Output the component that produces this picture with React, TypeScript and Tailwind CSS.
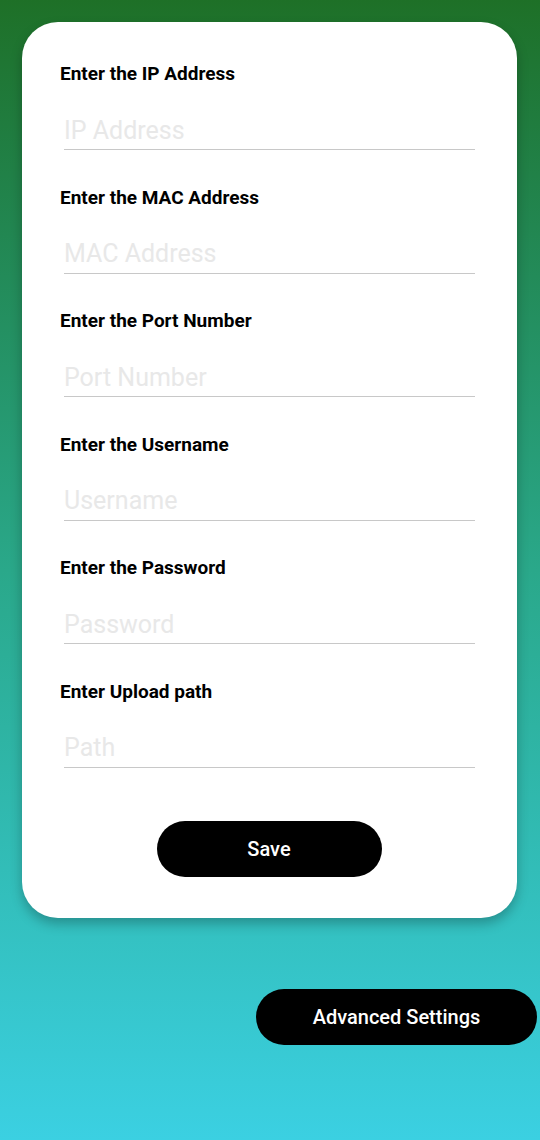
const fields = [
  { label: "Enter the IP Address", placeholder: "IP Address" },
  { label: "Enter the MAC Address", placeholder: "MAC Address" },
  { label: "Enter the Port Number", placeholder: "Port Number" },
  { label: "Enter the Username", placeholder: "Username" },
  { label: "Enter the Password", placeholder: "Password" },
  { label: "Enter Upload path", placeholder: "Path" },
];

export default function App() {
  return (
    <div className="min-h-[1140px] w-full bg-gradient-to-b from-[#1e7027] via-[#2aa88a] to-[#3bd0e2] pt-[22px] font-['Roboto',sans-serif]">
      <div className="ml-[22px] mr-[23px] rounded-[36px] bg-white pl-[38px] pr-[42px] pt-[40px] pb-[41px] shadow-[0_6px_12px_rgba(0,0,0,0.25)]">
        <div className="flex flex-col gap-[35.5px]">
          {fields.map((f) => (
            <div key={f.label} className="flex flex-col">
              <label className="text-[19px] leading-[24px] font-bold text-black">{f.label}</label>
              <input
                placeholder={f.placeholder}
                className="ml-[4px] mt-[22px] h-[42px] border-b-[1.5px] border-[#c8c8c8] bg-transparent px-0 pt-[3px] text-[25px] outline-none placeholder:text-[#e8e8e8]"
              />
            </div>
          ))}
        </div>
        <div className="mt-[53px] flex justify-center pl-[3px]">
          <button className="h-[56px] w-[225px] rounded-full bg-black text-[20px] font-medium text-white">Save</button>
        </div>
      </div>
      <div className="mt-[71px] flex justify-end pr-[3px]">
        <button className="h-[56px] w-[281px] rounded-full bg-black text-[20px] font-medium text-white">Advanced Settings</button>
      </div>
    </div>
  );
}
